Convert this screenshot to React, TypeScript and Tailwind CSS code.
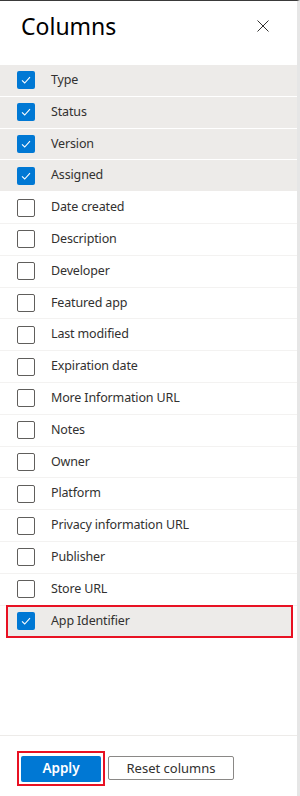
import React from "react";

const items: { label: string; checked: boolean }[] = [
  { label: "Type", checked: true },
  { label: "Status", checked: true },
  { label: "Version", checked: true },
  { label: "Assigned", checked: true },
  { label: "Date created", checked: false },
  { label: "Description", checked: false },
  { label: "Developer", checked: false },
  { label: "Featured app", checked: false },
  { label: "Last modified", checked: false },
  { label: "Expiration date", checked: false },
  { label: "More Information URL", checked: false },
  { label: "Notes", checked: false },
  { label: "Owner", checked: false },
  { label: "Platform", checked: false },
  { label: "Privacy information URL", checked: false },
  { label: "Publisher", checked: false },
  { label: "Store URL", checked: false },
];

const rowFont = { fontFamily: '"Noto Sans", sans-serif', letterSpacing: "-0.15px" };

function Box({ checked }: { checked: boolean }) {
  if (checked) {
    return (
      <div className="w-[18px] h-[18px] rounded-[2px] bg-[#0078d4] flex items-center justify-center shrink-0">
        <svg width="12" height="12" viewBox="0 0 12 12" fill="none">
          <path d="M2 6.3 L4.7 9 L10 3.2" stroke="white" strokeWidth="1.1" />
        </svg>
      </div>
    );
  }
  return <div className="w-[18px] h-[18px] rounded-[2px] border border-[#605e5c] bg-white shrink-0" />;
}

export default function App() {
  return (
    <div
      className="w-[300px] h-[796px] bg-white flex flex-col border-t border-[#3a3a3a] border-r-[3px] border-r-[#e6e6e6] text-[#323130]"
      style={{ fontFamily: '"Noto Sans", "Open Sans", sans-serif' }}
    >
      <div className="h-[64px] flex items-start justify-between pl-[21px] pr-[28px] pt-[8px] shrink-0">
        <div className="text-[23px] leading-[34px] text-black font-normal">Columns</div>
        <svg width="12" height="12" viewBox="0 0 12 12" className="mt-[11px]" fill="none">
          <path d="M0.5 0.5 L11.5 11.5 M11.5 0.5 L0.5 11.5" stroke="#323130" strokeWidth="1" />
        </svg>
      </div>
      <div className="flex-1 flex flex-col">
        {items.map((it) => (
          <div
            key={it.label}
            className={
              "h-[31.8px] flex items-center pl-[17px] border-b " +
              (it.checked ? "bg-[#edebe9] border-white" : "bg-white border-[#f3f2f1]")
            }
          >
            <Box checked={it.checked} />
            <span className="ml-[16px] text-[12.5px] text-[#323130]" style={rowFont}>
              {it.label}
            </span>
          </div>
        ))}
        <div className="relative h-[31.8px] flex items-center pl-[17px]">
          <div className="absolute left-[6px] right-[4px] top-[-1px] bottom-[-1px] border-2 border-[#e81123] bg-[#edebe9]" />
          <div className="relative flex items-center">
            <Box checked={true} />
            <span className="ml-[16px] text-[12.5px] text-[#323130]" style={rowFont}>
              App Identifier
            </span>
          </div>
        </div>
      </div>
      <div className="h-[61px] border-t border-[#edebe9] flex items-start pl-[17px] pt-[15px] shrink-0">
        <div className="flex items-center gap-[3px]">
          <div className="border-2 border-[#e81123] p-[2px]">
            <button className="w-[80px] h-[26px] bg-[#0078d4] rounded-[2px] text-white text-[13.5px] font-semibold leading-none">
              Apply
            </button>
          </div>
          <button className="w-[126px] h-[24px] border border-[#8a8886] rounded-[2px] bg-white text-[13px] text-[#323130] leading-none">
            Reset columns
          </button>
        </div>
      </div>
    </div>
  );
}
